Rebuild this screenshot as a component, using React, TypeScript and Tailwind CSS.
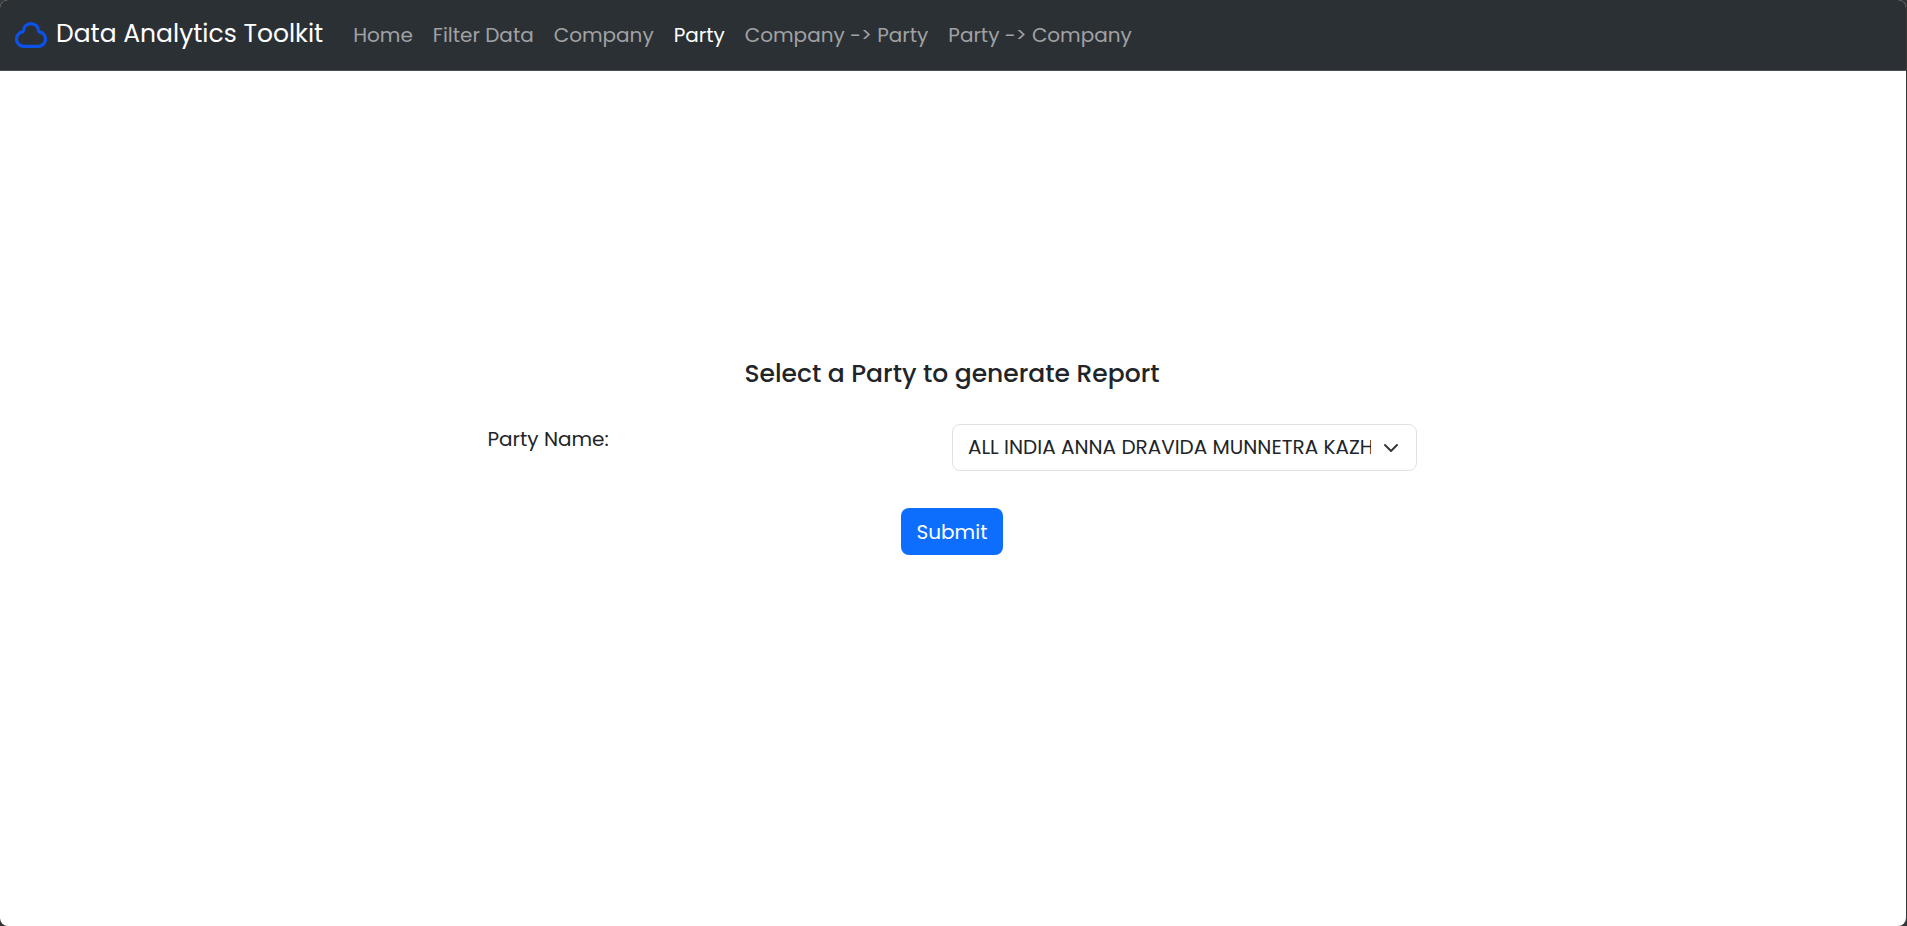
import { useState } from "react";
import clsx from "clsx";

const LINKS = [
  { label: "Home", href: "#home" },
  { label: "Filter Data", href: "#filter" },
  { label: "Company", href: "#company" },
  { label: "Party", href: "#party" },
  { label: "Company -> Party", href: "#company-party" },
  { label: "Party -> Company", href: "#party-company" },
];

const PARTIES = ["ALL INDIA ANNA DRAVIDA MUNNETRA KAZHAGAM"];

function CloudLogo() {
  return (
    <svg
      className="h-[26px] w-8 shrink-0"
      viewBox="0 0 32 26"
      fill="none"
      stroke="#0b52e6"
      strokeWidth="3.2"
      strokeLinejoin="round"
      aria-hidden="true"
    >
      <path d="M8.9 24.4h14.2a7.3 7.3 0 0 0 1.3-14.5c-.6-.1-.9-.5-.9-1.1a7.5 7.2 0 0 0-15 0c0 .6-.3 1-.9 1.1A7.3 7.3 0 0 0 8.9 24.4z" />
    </svg>
  );
}

function Navbar({ current }: { current: string }) {
  return (
    <header className="flex h-[71px] items-center border-b border-[#495057] bg-[#2b3035] px-[15px]">
      <a href="#home" className="flex items-center gap-[9px] text-[25px] leading-9 text-white">
        <CloudLogo />
        <span className="pb-0.5">Data Analytics Toolkit</span>
      </a>
      <nav className="ml-[30px] flex gap-5 text-xl leading-[30px]">
        {LINKS.map((link) => (
          <a
            key={link.label}
            href={link.href}
            className={clsx(link.label === current ? "text-white" : "text-[#a0a2a4]")}
          >
            {link.label}
          </a>
        ))}
      </nav>
    </header>
  );
}

export default function App() {
  const [party, setParty] = useState(PARTIES[0]);

  return (
    <div className="min-h-screen bg-[#343638] pr-px font-[Poppins,Inter,sans-serif]">
      <div className="flex min-h-screen flex-col overflow-hidden rounded-lg bg-white text-[#212529]">
        <Navbar current="Party" />
        <main className="mx-auto w-1/2 pt-[288px] pr-[13px] pl-[11px]">
          <form onSubmit={(event) => event.preventDefault()} className="flex flex-col items-center">
            <h1 className="text-[25px] leading-[30px] font-medium">Select a Party to generate Report</h1>
            <div className="mt-[35px] grid w-full grid-cols-2">
              <label htmlFor="party" className="text-xl leading-[30px]">
                Party Name:
              </label>
              <div className="relative">
                <select
                  id="party"
                  value={party}
                  onChange={(event) => setParty(event.target.value)}
                  className="h-[47px] w-full appearance-none rounded-lg border border-[#dee2e6] bg-white pr-[45px] pb-px pl-[15px] text-xl"
                >
                  {PARTIES.map((name) => (
                    <option key={name}>{name}</option>
                  ))}
                </select>
                <svg
                  className="pointer-events-none absolute top-4 right-[18px] size-4"
                  viewBox="0 0 16 16"
                  fill="none"
                  stroke="#343a40"
                  strokeWidth="2"
                  strokeLinecap="round"
                  strokeLinejoin="round"
                  aria-hidden="true"
                >
                  <path d="m2 5 6 6 6-6" />
                </svg>
              </div>
            </div>
            <button type="submit" className="mt-[37px] h-[47px] rounded-lg bg-[#0d6efd] px-4 text-xl text-white">
              Submit
            </button>
          </form>
        </main>
      </div>
    </div>
  );
}
